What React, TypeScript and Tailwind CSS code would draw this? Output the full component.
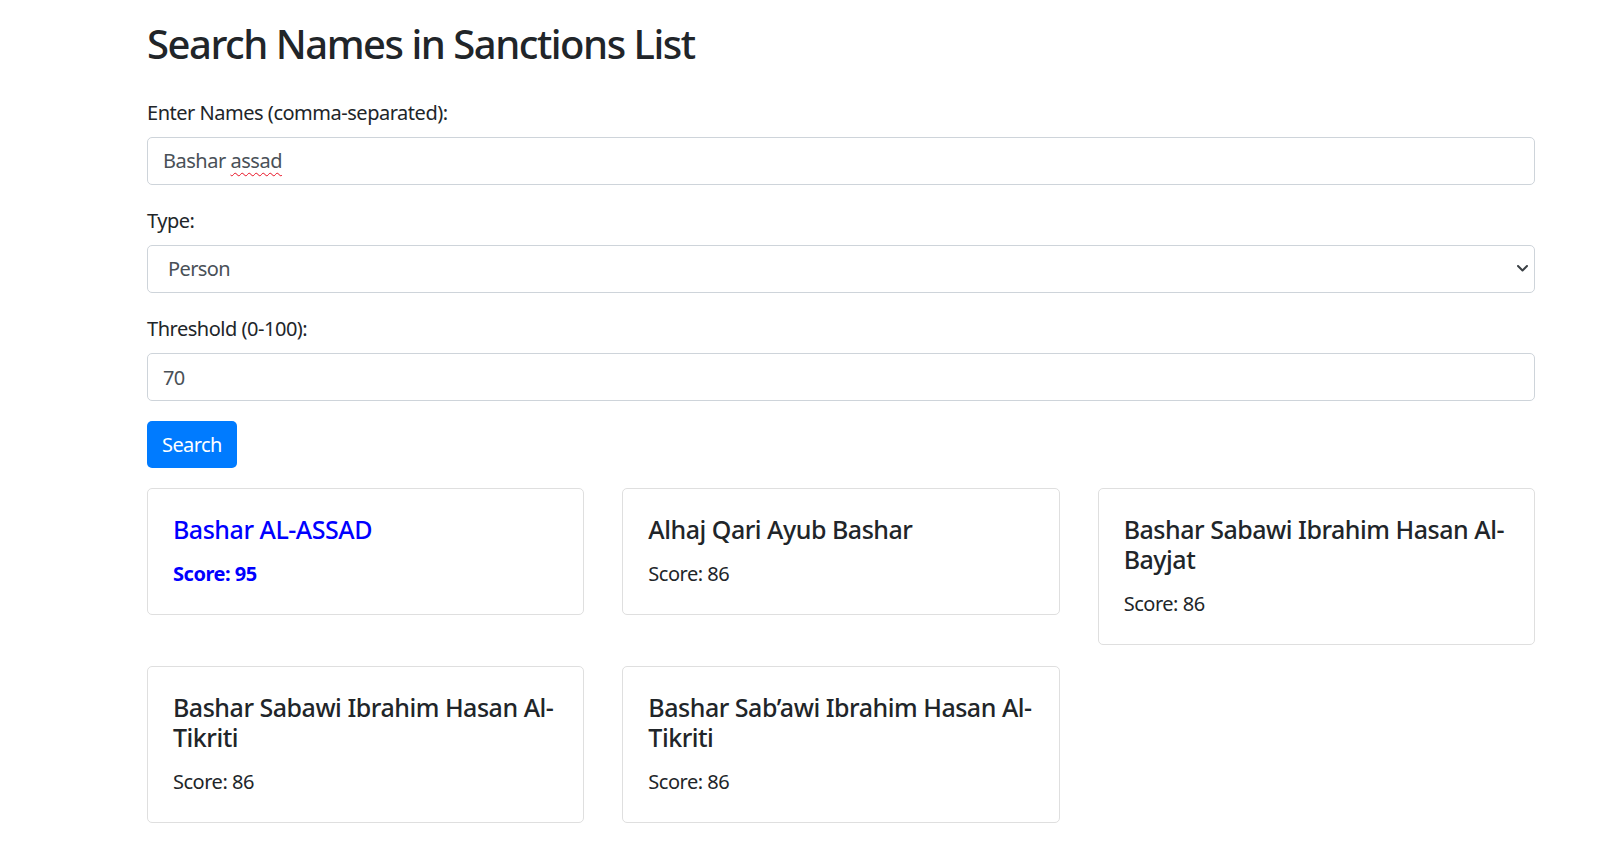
import React from 'react'

const results = [
  { name: 'Bashar AL-ASSAD', score: 95, best: true },
  { name: 'Alhaj Qari Ayub Bashar', score: 86 },
  { name: 'Bashar Sabawi Ibrahim Hasan Al-Bayjat', score: 86 },
  { name: 'Bashar Sabawi Ibrahim Hasan Al-Tikriti', score: 86 },
  { name: 'Bashar Sab\u2019awi Ibrahim Hasan Al-Tikriti', score: 86 },
]

const font = { fontFamily: '"Noto Sans", "Open Sans", sans-serif' }

const App = () => {
  return (
    <div className="min-h-screen bg-white text-[#212529] tracking-[-0.03em]" style={font}>
      <div className="ml-[147px] w-[1388px] pt-[20px] pb-[20px]">
        <h2 className="text-[40px] leading-[48px] font-medium mb-[29px] tracking-[-0.037em]">Search Names in Sanctions List</h2>

        <div className="mb-[20px]">
          <label className="block text-[20px] leading-[30px] pt-[1px] mb-[9px]">Enter Names (comma-separated):</label>
          <div className="h-[48px] w-full border border-[#ced4da] rounded-[5px] px-[15px] flex items-center text-[20px] text-[#495057]">
            <span>Bashar&nbsp;</span>
            <span className="underline decoration-wavy decoration-[#e81123] decoration-1 underline-offset-[4px]">assad</span>
          </div>
        </div>

        <div className="mb-[20px]">
          <label className="block text-[20px] leading-[30px] pt-[1px] mb-[9px]">Type:</label>
          <div className="relative">
            <select className="appearance-none h-[48px] w-full border border-[#ced4da] rounded-[5px] pl-[20px] pr-[40px] text-[20px] text-[#495057] bg-white tracking-[-0.03em]" defaultValue="Person">
              <option>Person</option>
              <option>Entity</option>
            </select>
            <svg className="absolute right-[7px] top-[20px] pointer-events-none" width="11" height="7" viewBox="0 0 11 7" fill="none">
              <path d="M1 1 L5.5 5.5 L10 1" stroke="#3b4045" strokeWidth="2" strokeLinecap="round" strokeLinejoin="round" />
            </svg>
          </div>
        </div>

        <div className="mb-[20px]">
          <label className="block text-[20px] leading-[30px] pt-[1px] mb-[9px]">Threshold (0-100):</label>
          <input type="text" defaultValue="70" className="h-[48px] w-full border border-[#ced4da] rounded-[5px] px-[15px] text-[20px] text-[#495057] outline-none tracking-[-0.03em]" />
        </div>

        <button className="h-[47px] px-[15px] rounded-[5px] bg-[#007bff] text-white text-[20px] tracking-[-0.03em]">Search</button>

        <div className="grid grid-cols-3 gap-x-[38px] gap-y-[21px] items-start mt-[20px]">
          {results.map((r, i) => (
            <div key={i} className="border border-[#dfdfdf] rounded-[5px] p-[25px]">
              <h5 className={`text-[25px] leading-[30px] font-medium mb-[15px] ${r.best ? 'text-[#0000ff]' : ''}`}>{r.name}</h5>
              <p className={`text-[20px] leading-[30px] ${r.best ? 'text-[#0000ff] font-bold' : ''}`}>Score: {r.score}</p>
            </div>
          ))}
        </div>
      </div>
    </div>
  )
}

export default App
